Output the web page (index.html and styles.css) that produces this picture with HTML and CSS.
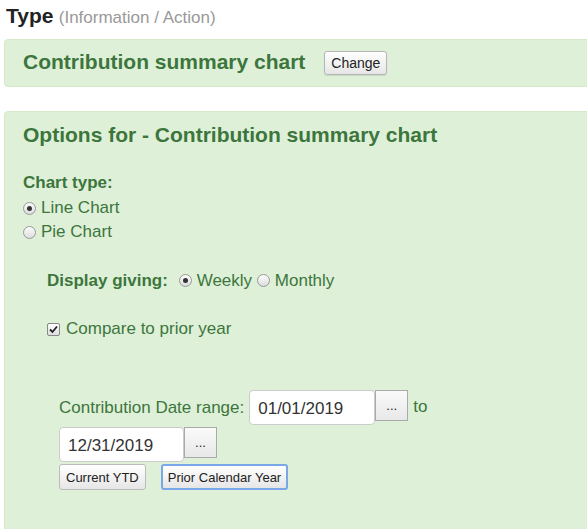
FILE: index.html
```html
<!DOCTYPE html>
<html>
<head>
<meta charset="utf-8">
<link rel="stylesheet" href="styles.css">
</head>
<body>
<div class="page">
  <div class="heading"><b>Type</b> <span class="sub">(Information / Action)</span></div>
  <div class="alert first">
    <span class="title">Contribution summary chart</span>
    <button class="btn small">Change</button>
  </div>
  <div class="alert second">
    <div class="title">Options for - Contribution summary chart</div>
    <div class="label">Chart type:</div>
    <label class="opt first-opt"><span class="radio on"></span>Line Chart</label>
    <label class="opt"><span class="radio"></span>Pie Chart</label>
    <div class="giving">
      <span class="label inline">Display giving:</span>
      <span class="radio on"></span>Weekly
      <span class="radio"></span>Monthly
    </div>
    <div class="compare"><span class="check"><svg width="9" height="9" viewBox="0 0 9 9"><path d="M1 4.5 L3.5 7 L8 1.5" fill="none" stroke="#222" stroke-width="1.8"/></svg></span>Compare to prior year</div>
    <div class="range">
      <div class="row1">
        <span class="rlabel">Contribution Date range:</span>
        <span class="input w1">01/01/2019</span>
        <button class="btn dots">...</button>
        <span class="to">to</span>
      </div>
      <div class="row2">
        <span class="input w2">12/31/2019</span>
        <button class="btn dots">...</button>
      </div>
      <div class="row3">
        <button class="btn quick">Current YTD</button>
        <button class="btn quick focus">Prior Calendar Year</button>
      </div>
    </div>
  </div>
</div>
</body>
</html>
```
FILE: styles.css
```css
html, body { margin: 0; padding: 0; overflow: hidden; background: #fff; }
body { font-family: "Liberation Sans", Arial, sans-serif; font-size: 17px; color: #333; }
.page { width: 600px; padding: 4px 0 0 4px; }
.heading { font-size: 19px; height: 24px; line-height: 24px; color: #222; padding-left: 2px; overflow: hidden; }
.heading b { font-weight: bold; font-size: 21px; }
.sub { font-size: 17px; color: #999; }
.alert { background: #dff0d8; border: 1px solid #d6e9c6; border-radius: 4px; color: #3c763d; }
.first { margin-top: 11px; height: 46px; display: flex; align-items: center; padding-left: 18px; box-sizing: content-box; }
.first .title { margin-top: -2px; }
.title { font-size: 21px; font-weight: bold; color: #3c763d; }
.btn { font-family: "Liberation Sans", Arial, sans-serif; background: linear-gradient(#fff, #e6e6e6); border: 1px solid #b5b5b5; border-radius: 3px; color: #222; padding: 0; cursor: default; }
.small { margin-left: 19px; font-size: 14px; height: 24px; width: 63px; box-shadow: 0 1px 1px rgba(0,0,0,0.1); }
.second { margin-top: 24px; padding: 11px 0 40px 18px; height: 400px; }
.second .title { line-height: 24px; }
.label { font-weight: bold; margin-top: 26px; line-height: 20px; }
.label.inline { margin: 0 6px 0 0; }
.opt { display: flex; align-items: center; line-height: 24px; margin-left: 0; }
.first-opt { margin-top: 3px; }
.radio { display: inline-block; width: 13px; height: 13px; border-radius: 50%; border: 1px solid #999; background: linear-gradient(#fdfdfd, #dcdcdc); box-sizing: border-box; margin-right: 5px; position: relative; vertical-align: -1px; }
.radio.on::after { content: ""; position: absolute; left: 3px; top: 3px; width: 5px; height: 5px; border-radius: 50%; background: #333; }
.giving { margin: 25px 0 0 24px; line-height: 24px; }
.giving .radio { margin-left: 0; }
.compare { margin: 24px 0 0 24px; line-height: 24px; display: flex; align-items: center; }
.check { width: 13px; height: 13px; border: 1px solid #888; border-radius: 2px; background: linear-gradient(#fff, #ddd); box-sizing: border-box; display: inline-flex; align-items: center; justify-content: center; margin-right: 6px; margin-left: 0; }
.range { margin: 49px 0 0 36px; }
.row1, .row2 { display: flex; align-items: flex-start; }
.rlabel { line-height: 35px; margin-right: 5px; color: #3c763d; }
.input { display: inline-block; height: 35px; line-height: 35px; background: #fff; border: 1px solid #ccc; border-radius: 4px; box-sizing: border-box; padding-left: 8px; color: #333; }
.w1 { width: 126px; }
.w2 { width: 125px; }
.dots { width: 33px; height: 31px; font-size: 13px; border-radius: 0; background: linear-gradient(#fafafa, #e8e8e8); border-color: #aaa; }
.to { line-height: 33px; margin-left: 5px; color: #3c763d; }
.row2 { margin-top: 2px; }
.row3 { margin-top: 2px; display: flex; gap: 15px; }
.quick { font-size: 13px; height: 26px; padding: 0 6px; border-radius: 3px; border-color: #bbb; }
.focus { border: 2px solid #7aa7e8; padding: 0 5px; }
```
